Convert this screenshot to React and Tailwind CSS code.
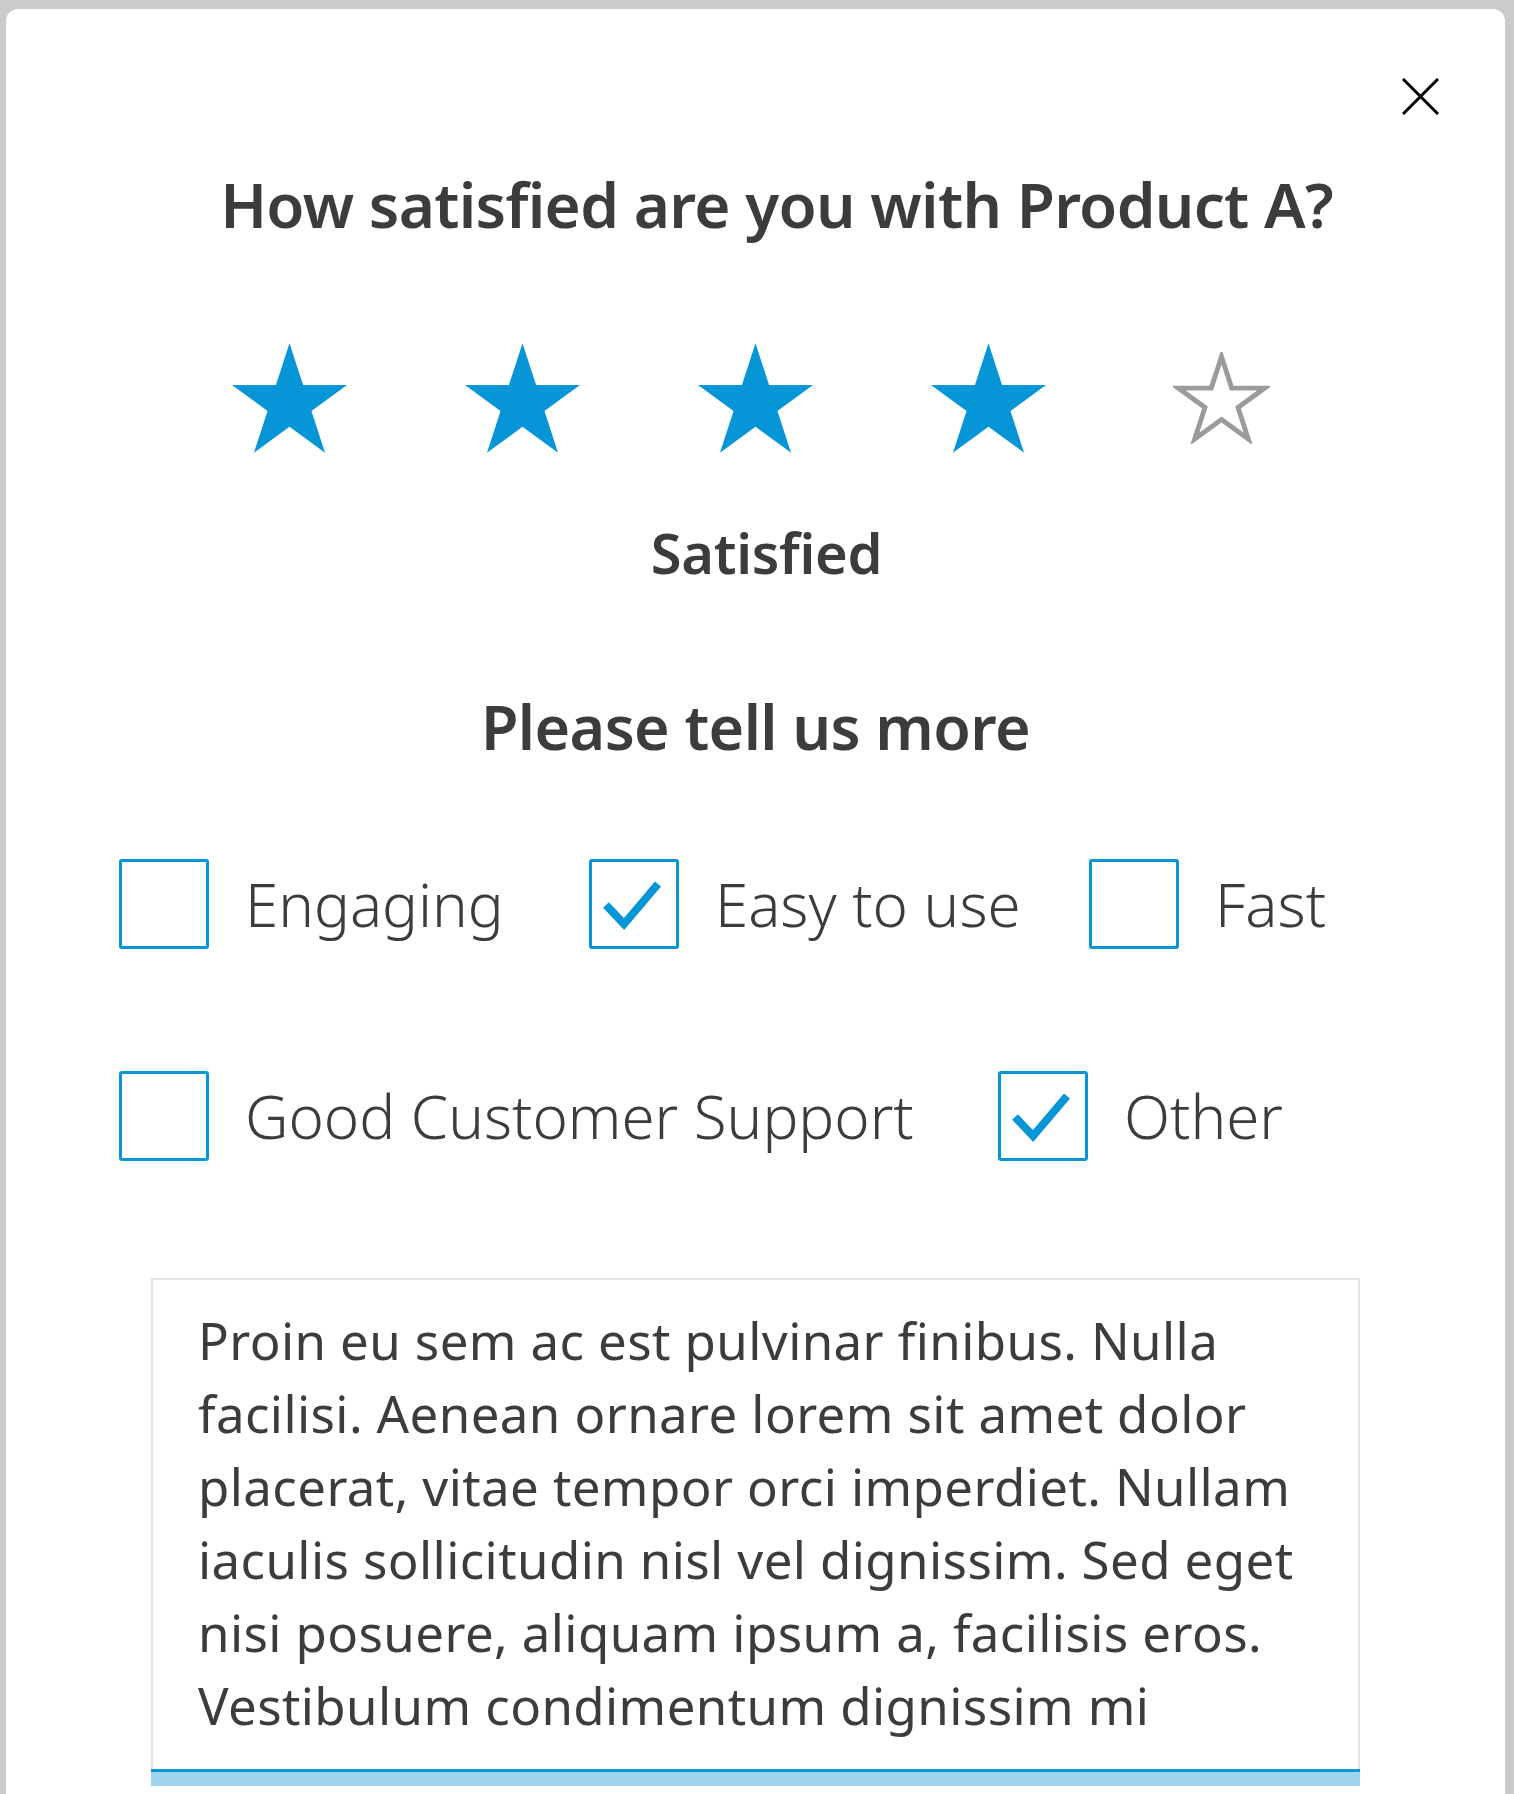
const FONT = "font-['Noto_Sans','Open_Sans',sans-serif]"

const STAR_POINTS = '60.5,0 74.08,41.81 118.04,41.8 82.47,67.64 96.06,109.45 60.5,83.6 24.94,109.45 38.53,67.64 2.96,41.8 46.92,41.81'

function Star({ filled }) {
  if (filled) {
    return (
      <svg width="115" height="110" viewBox="2.96 0 115.08 109.45">
        <polygon points={STAR_POINTS} fill="#0696d7" />
      </svg>
    )
  }
  return (
    <svg width="97" height="92" viewBox="-4 -5 129 120">
      <polygon points={STAR_POINTS} fill="none" stroke="#9b9b9b" strokeWidth="6.5" strokeLinejoin="miter" />
    </svg>
  )
}

function Checkbox({ label, checked, width }) {
  return (
    <div className={`flex items-center ${width}`}>
      <span className="w-[90px] h-[90px] shrink-0 border-[3px] border-[#0696d7] rounded-[3px] bg-white flex items-center justify-center">
        {checked && (
          <svg width="84" height="84" viewBox="0 0 84 84">
            <polyline points="14,43 32,62 66,22" fill="none" stroke="#0696d7" strokeWidth="8" strokeLinecap="butt" strokeLinejoin="miter" />
          </svg>
        )}
      </span>
      <span className="ml-[36px] text-[60px] leading-[90px] font-light text-[#3c3c3c] whitespace-nowrap">{label}</span>
    </div>
  )
}

const LINES = [
  'Proin eu sem ac est pulvinar finibus. Nulla',
  'facilisi. Aenean ornare lorem sit amet dolor',
  'placerat, vitae tempor orci imperdiet. Nullam',
  'iaculis sollicitudin nisl vel dignissim. Sed eget',
  'nisi posuere, aliquam ipsum a, facilisis eros.',
  'Vestibulum condimentum dignissim mi',
]

export default function App() {
  return (
    <div className={`min-h-screen bg-[#cbcbcb] pt-[9px] pl-[6px] pr-[9px] ${FONT}`}>
      <div className="relative bg-white rounded-t-[12px] h-[1785px] overflow-hidden">
        <button className="absolute right-[66px] top-[69px]">
          <svg width="37" height="37" viewBox="0 0 37 37">
            <path d="M1 1 L36 36 M36 1 L1 36" stroke="#000" strokeWidth="3" fill="none" />
          </svg>
        </button>

        <h1 className="pt-[155px] pl-[42px] text-center text-[62px] leading-[80px] tracking-[-0.7px] font-semibold text-[#3c3c3c]">
          How satisfied are you with Product A?
        </h1>

        <div className="mt-[99px] flex justify-center">
          {[true, true, true, true, false].map((f, i) => (
            <div key={i} className="w-[233px] h-[110px] flex items-center justify-center">
              <Star filled={f} />
            </div>
          ))}
        </div>

        <p className="mt-[64px] pl-[22px] text-center text-[56px] leading-[70px] tracking-[-0.3px] font-semibold text-[#3c3c3c]">Satisfied</p>

        <h2 className="mt-[100px] text-center text-[61px] leading-[80px] tracking-[-0.6px] font-semibold text-[#3c3c3c]">Please tell us more</h2>

        <div className="mt-[92px] pl-[113px] flex">
          <Checkbox label="Engaging" width="w-[470px]" />
          <Checkbox label="Easy to use" checked width="w-[500px]" />
          <Checkbox label="Fast" />
        </div>
        <div className="mt-[122px] pl-[113px] flex">
          <Checkbox label="Good Customer Support" width="w-[879px]" />
          <Checkbox label="Other" checked />
        </div>

        <div className="mt-[117px] mx-auto w-[1209px]">
          <div className="border-2 border-b-0 border-[#e3e3e3] pl-[45px] pr-[40px] pt-[24px] pb-[27px] text-[51px] leading-[73px] tracking-[0.4px] text-[#3c3c3c]">
            {LINES.map((l) => (
              <div key={l} className="whitespace-nowrap">{l}</div>
            ))}
          </div>
          <div className="h-[3px] bg-[#0696d7]" />
          <div className="h-[14px] bg-[#9dd5ee]" />
        </div>
      </div>
    </div>
  )
}
